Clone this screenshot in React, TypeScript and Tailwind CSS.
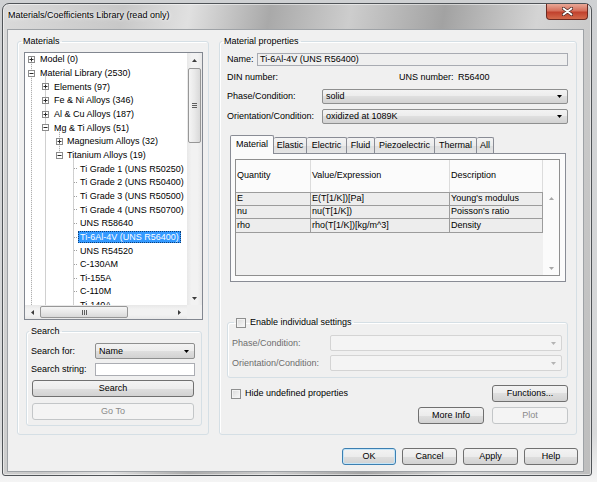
import type { ReactNode } from 'react'

const FONT = "font-['Liberation_Sans',Arial,sans-serif]"
const BTN_BG = 'bg-[linear-gradient(#f3f3f3,#ececec_50%,#dfdfdf_50%,#d2d2d2)]'

type Dir = 'up' | 'down' | 'left' | 'right'

function Arrow({ dir, color = '#3c3c3c' }: { dir: Dir; color?: string }) {
  const horiz = dir === 'left' || dir === 'right'
  const d = {
    up: 'M0 3L2.5 0 5 3z',
    down: 'M0 0h5L2.5 3z',
    left: 'M3 0v5L0 2.5z',
    right: 'M0 0v5l3-2.5z',
  }[dir]
  return (
    <svg width={horiz ? 3 : 5} height={horiz ? 5 : 3} viewBox={horiz ? '0 0 3 5' : '0 0 5 3'}>
      <path d={d} fill={color} />
    </svg>
  )
}

function Btn({ children, className = '', disabled, primary }: { children: ReactNode; className?: string; disabled?: boolean; primary?: boolean }) {
  const look = disabled
    ? 'border-[#c3c6c8] bg-[#f4f4f4] text-[#8a8a8a]'
    : primary
      ? `border-[#3c7fb1] shadow-[inset_0_0_0_1px_#c4e5f8] ${BTN_BG}`
      : `border-[#707070] ${BTN_BG}`
  return (
    <div className={`flex items-center justify-center h-[17px] rounded-[3px] border ${look} ${className}`}>
      {children}
    </div>
  )
}

function Combo({ value, className = '', disabled }: { value?: string; className?: string; disabled?: boolean }) {
  return (
    <div
      className={`flex items-center justify-between rounded-[2px] border ${
        disabled ? 'border-[#d4d4d4] bg-[#f4f4f4]' : `border-[#8e8f8f] ${BTN_BG}`
      } ${className}`}
    >
      <span className="pl-[3px]">{value}</span>
      <span className="mr-[5px] flex">
        <Arrow dir="down" color={disabled ? '#b4b4b4' : '#000'} />
      </span>
    </div>
  )
}

function Check() {
  return (
    <span className="inline-block w-[10px] h-[10px] border border-[#8e8f8f] bg-[linear-gradient(135deg,#d9d9d9,#fafafa)] shadow-[inset_0_0_0_1px_#f3f3f3]" />
  )
}

function GroupBox({ label, className = '', children, legendClass = 'ml-[2px]' }: { label: ReactNode; className?: string; children: ReactNode; legendClass?: string }) {
  return (
    <fieldset className={`border border-[#d5dfe5] rounded-[3px] shadow-[inset_1px_1px_0_#fff] ${className}`}>
      <legend className={`px-[2px] leading-[11px] h-[11px] ${legendClass}`}>{label}</legend>
      {children}
    </fieldset>
  )
}

const TREE: [string, number, '+' | '-' | null][] = [
  ['Model (0)', 0, '+'],
  ['Material Library (2530)', 0, '-'],
  ['Elements (97)', 1, '+'],
  ['Fe & Ni Alloys (346)', 1, '+'],
  ['Al & Cu Alloys (187)', 1, '+'],
  ['Mg & Ti Alloys (51)', 1, '-'],
  ['Magnesium Alloys (32)', 2, '+'],
  ['Titanium Alloys (19)', 2, '-'],
  ['Ti Grade 1 (UNS R50250)', 3, null],
  ['Ti Grade 2 (UNS R50400)', 3, null],
  ['Ti Grade 3 (UNS R50500)', 3, null],
  ['Ti Grade 4 (UNS R50700)', 3, null],
  ['UNS R58640', 3, null],
  ['Ti-6Al-4V (UNS R56400)', 3, null],
  ['UNS R54520', 3, null],
  ['C-130AM', 3, null],
  ['Ti-155A', 3, null],
  ['C-110M', 3, null],
  ['Ti-140A', 3, null],
]
const ROW_H = 13.67
const LINE_X = [6.5, 20.5, 34.5, 48.5]
const INDENT = ['pl-[13px]', 'pl-[27px]', 'pl-[40px]', 'pl-[53px]']

function TreeLines() {
  const cy = (i: number) => ROW_H * i + ROW_H / 2
  const dot = { stroke: '#a0a0a0', strokeWidth: 1, strokeDasharray: '1 1' }
  return (
    <svg className="absolute left-0 top-0" width="162" height="252">
      <line x1="6.5" y1={cy(0)} x2="6.5" y2="252" {...dot} />
      <line x1="20.5" y1={cy(1)} x2="20.5" y2="252" {...dot} />
      <line x1="34.5" y1={cy(5)} x2="34.5" y2={cy(7)} {...dot} />
      <line x1="48.5" y1={cy(7)} x2="48.5" y2="252" {...dot} />
      {TREE.map(([, lvl, exp], i) =>
        exp ? (
          <g key={i}>
            <rect x={LINE_X[lvl] - 3} y={Math.round(cy(i)) - 3.5} width="6" height="6" fill="#fff" stroke="#8c8c8c" />
            <line x1={LINE_X[lvl] - 2} y1={Math.round(cy(i)) - 0.5} x2={LINE_X[lvl] + 2} y2={Math.round(cy(i)) - 0.5} stroke="#2a2a2a" />
            {exp === '+' && (
              <line x1={LINE_X[lvl]} y1={Math.round(cy(i)) - 2.5} x2={LINE_X[lvl]} y2={Math.round(cy(i)) + 1.5} stroke="#2a2a2a" />
            )}
          </g>
        ) : (
          <line key={i} x1="49" y1={Math.round(cy(i)) - 0.5} x2="53" y2={Math.round(cy(i)) - 0.5} {...dot} />
        ),
      )}
    </svg>
  )
}

function Thumb({ vertical, className = '' }: { vertical?: boolean; className?: string }) {
  return (
    <div
      className={`flex items-center justify-center rounded-[2px] border border-[#979797] ${
        vertical
          ? 'flex-col gap-[1px] bg-[linear-gradient(90deg,#f5f5f5,#e9e9e9_50%,#d9d9d9)]'
          : 'flex-row gap-[1px] bg-[linear-gradient(#f5f5f5,#e9e9e9_50%,#d9d9d9)]'
      } ${className}`}
    >
      {[0, 1, 2].map(i => (
        <span key={i} className={vertical ? 'w-[5px] h-[1px] bg-[#5e5e5e]' : 'w-[1px] h-[5px] bg-[#5e5e5e]'} />
      ))}
    </div>
  )
}

function MaterialTree() {
  return (
    <div className="grid grid-cols-[162px_15px] grid-rows-[252px_14px] w-[179px] h-[268px] border border-[#828790] bg-white">
      <div className="relative overflow-hidden">
        <TreeLines />
        <div className="relative">
          {TREE.map(([label, lvl], i) => (
            <div key={label} className={`h-[13.67px] flex items-center whitespace-nowrap ${INDENT[lvl]}`}>
              {i === 13 ? (
                <span className="h-[12px] flex items-center bg-[#3399ff] text-white px-[1px] border border-dotted border-[#0b3f7a]">
                  {label}
                </span>
              ) : (
                <span className="px-[2px]">{label}</span>
              )}
            </div>
          ))}
        </div>
      </div>
      {/* vertical scrollbar */}
      <div className="flex flex-col bg-[linear-gradient(90deg,#e8e8e8,#f2f2f2_30%,#f2f2f2_70%,#e8e8e8)]">
        <div className="h-[14px] flex items-center justify-center"><Arrow dir="up" /></div>
        <Thumb vertical className="mt-[1px] mx-[1px] h-[75px]" />
        <div className="flex-1" />
        <div className="h-[14px] flex items-center justify-center"><Arrow dir="down" /></div>
      </div>
      {/* horizontal scrollbar */}
      <div className="flex bg-[linear-gradient(#e8e8e8,#f2f2f2_30%,#f2f2f2_70%,#e8e8e8)]">
        <div className="w-[15px] flex items-center justify-center"><Arrow dir="left" /></div>
        <Thumb className="my-[1px] w-[88px]" />
        <div className="flex-1" />
        <div className="w-[15px] flex items-center justify-center"><Arrow dir="right" /></div>
      </div>
      <div className="bg-[#f0f0f0]" />
    </div>
  )
}

const TABS = [
  ['Material', 'w-[44px]'],
  ['Elastic', 'w-[33px]'],
  ['Electric', 'w-[40px]'],
  ['Fluid', 'w-[28px]'],
  ['Piezoelectric', 'w-[60px]'],
  ['Thermal', 'w-[42px]'],
  ['All', 'w-[17px]'],
]

const ROWS = [
  ['E', 'E(T[1/K])[Pa]', "Young's modulus"],
  ['nu', 'nu(T[1/K])', "Poisson's ratio"],
  ['rho', 'rho(T[1/K])[kg/m^3]', 'Density'],
]
const COLS = ['w-[75px]', 'w-[139px]', 'w-[93px]']

function PropertyTable() {
  return (
    <div className="w-[325px] h-[117px] border border-[#8f8f8f] bg-[#f0f0f0] flex flex-col">
      <div className="h-[32px] flex bg-[#fbfbfb]">
        {['Quantity', 'Value/Expression', 'Description'].map((h, i) => (
          <div key={h} className={`${COLS[i]} flex items-center pl-[1px] pb-[2px] border-r border-[#dcdcdc]`}>{h}</div>
        ))}
        <div className="flex-1" />
      </div>
      <div className="flex flex-1">
        <div className="w-[307px]">
          {ROWS.map((r, ri) => (
            <div key={r[0]} className={`flex h-[13.67px] border-b border-[#9c9c9c] ${ri === 0 ? 'border-t' : ''}`}>
              {r.map((c, i) => (
                <div key={i} className={`${COLS[i]} flex items-center pl-[1px] border-r border-[#9c9c9c] bg-[#ededed] whitespace-nowrap`}>
                  {c}
                </div>
              ))}
            </div>
          ))}
        </div>
        <div className="flex-1 flex flex-col items-center justify-between py-[5px] bg-[#fbfbfb]">
          <Arrow dir="up" color="#a8a8a8" />
          <Arrow dir="down" color="#a8a8a8" />
        </div>
      </div>
    </div>
  )
}

function MaterialProperties() {
  return (
    <GroupBox label="Material properties" className="w-[358px] h-[399px] flex flex-col" legendClass="ml-[2px]">
      <div className="flex items-center mt-[6px] pl-[7px] h-[13px]">
        <span className="w-[30px]">Name:</span>
        <div className="w-[311px] h-[13px] border border-[#a8abb2] bg-[#efefef] flex items-center pl-[2px]">
          Ti-6Al-4V (UNS R56400)
        </div>
      </div>
      <div className="flex items-center mt-[5px] pl-[7px] h-[12px]">
        <span className="w-[172px]">DIN number:</span>
        <span className="w-[59px]">UNS number:</span>
        <span>R56400</span>
      </div>
      <div className="flex items-center mt-[6px] pl-[7px]">
        <span className="w-[95px]">Phase/Condition:</span>
        <Combo value="solid" className="w-[246px] h-[15px]" />
      </div>
      <div className="flex items-center mt-[5px] pl-[7px]">
        <span className="w-[95px]">Orientation/Condition:</span>
        <Combo value="oxidized at 1089K" className="w-[246px] h-[15px]" />
      </div>

      {/* tabs */}
      <div className="ml-[10px] mt-[11px] w-[336px]">
        <div className="flex items-end h-[18px]">
          {TABS.map(([t, w], i) =>
            i === 0 ? (
              <div key={t} className={`${w} h-[19px] -mb-[1px] relative flex items-center justify-center bg-[#fbfbfb] border border-b-0 border-[#898c95] rounded-t-[2px] pb-[2px]`}>
                {t}
              </div>
            ) : (
              <div key={t} className={`${w} h-[16px] flex items-center justify-center border border-l-0 border-b-0 border-[#898c95] rounded-t-[2px] bg-[linear-gradient(#f3f3f3,#ebebeb_50%,#dedede_50%,#e5e5e5)]`}>
                {t}
              </div>
            ),
          )}
        </div>
        <div className="h-[129px] border border-[#898c95] bg-[#fbfbfb] pl-[4px] pt-[5px]">
          <PropertyTable />
        </div>
      </div>

      <GroupBox
        className="ml-[7px] mt-[35px] w-[341px] h-[61px] text-[#6d6d6d]"
        legendClass="ml-[6px]"
        label={
          <span className="flex items-center gap-[4px] text-black">
            <Check />
            Enable individual settings
          </span>
        }
      >
        <div className="flex items-center mt-[7px] pl-[4px]">
          <span className="w-[98px]">Phase/Condition:</span>
          <Combo disabled className="w-[232px] h-[16px]" />
        </div>
        <div className="flex items-center mt-[4px] pl-[4px]">
          <span className="w-[98px]">Orientation/Condition:</span>
          <Combo disabled className="w-[232px] h-[16px]" />
        </div>
      </GroupBox>

      <div className="flex items-center mt-[7px] pl-[11px] pr-[8px]">
        <Check />
        <span className="ml-[4px]">Hide undefined properties</span>
        <div className="flex-1" />
        <Btn className="w-[76px]">Functions...</Btn>
      </div>
      <div className="flex items-center justify-end gap-[8px] mt-[5px] pr-[8px]">
        <Btn className="w-[66px]">More Info</Btn>
        <Btn disabled className="w-[76px]">Plot</Btn>
      </div>
    </GroupBox>
  )
}

function Materials() {
  return (
    <GroupBox label="Materials" className="w-[192px] h-[399px]" legendClass="ml-[3px]">
      <div className="pl-[6px] pt-[5px]">
        <MaterialTree />
      </div>
      <GroupBox label="Search" className="ml-[8px] mt-[6px] w-[176px] h-[100px]" legendClass="ml-[2px]">
        <div className="flex items-center mt-[6px] pl-[4px]">
          <span className="w-[64px]">Search for:</span>
          <Combo value="Name" className="w-[100px] h-[16px]" />
        </div>
        <div className="flex items-center mt-[4px] pl-[4px]">
          <span className="w-[64px]">Search string:</span>
          <div className="w-[100px] h-[13px] border border-[#abadb3] bg-white" />
        </div>
        <Btn className="ml-[5px] mt-[4px] w-[162px]">Search</Btn>
        <Btn disabled className="ml-[5px] mt-[6px] w-[162px]">Go To</Btn>
      </GroupBox>
    </GroupBox>
  )
}

export default function App() {
  return (
    <div className={`relative w-[597px] h-[482px] overflow-hidden bg-[linear-gradient(#cfd1d3,#d9dadb_90%,#f4f4f4)] ${FONT} text-[9px] leading-[11px] text-black`}>
      {/* dialog window */}
      <div className="absolute left-[2px] top-[3px] w-[590px] h-[473px] rounded-t-[7px] rounded-b-[3px] border border-[#505458] bg-[linear-gradient(100deg,#dadada_0%,#c8c8c8_18%,#e0e0e0_28%,#a9a9a9_40%,#cdcdcd_52%,#a2a2a2_66%,#d4d4d4_80%,#bdbdbd_100%)] shadow-[inset_0_0_0_1px_rgba(255,255,255,0.5)] flex flex-col">
        <div className="h-[25px] flex items-start">
          <span className="pl-[5px] pt-[6px] [text-shadow:0_0_6px_#fff,0_0_3px_#fff]">
            Materials/Coefficients Library (read only)
          </span>
          <div className="ml-auto mr-[3px] w-[42px] h-[16px] rounded-b-[4px] border border-t-0 border-[#6b2a22] bg-[linear-gradient(#e9a897,#d5705c_45%,#c1412d_55%,#d36a4c)] flex items-center justify-center">
            <svg width="11" height="9" viewBox="0 0 11 9">
              <path d="M1.5 1.5l8 6M9.5 1.5l-8 6" stroke="#4a2a26" strokeWidth="3.4" strokeLinecap="round" />
              <path d="M1.5 1.5l8 6M9.5 1.5l-8 6" stroke="#fff" strokeWidth="1.8" strokeLinecap="round" />
            </svg>
          </div>
        </div>
        <div className="ml-[4px] mr-[7px] mb-[3px] flex-1 border border-[#9ea2a6] bg-[#f0f0f0] flex flex-col pl-[9px] pt-[6px] pr-[5px]">
          <div className="flex gap-[10px]">
            <Materials />
            <MaterialProperties />
          </div>
          <div className="flex justify-end gap-[6px] mt-[13px]">
            <Btn primary className="w-[54px]">OK</Btn>
            <Btn className="w-[55px]">Cancel</Btn>
            <Btn className="w-[55px]">Apply</Btn>
            <Btn className="w-[54px]">Help</Btn>
          </div>
        </div>
      </div>
    </div>
  )
}
